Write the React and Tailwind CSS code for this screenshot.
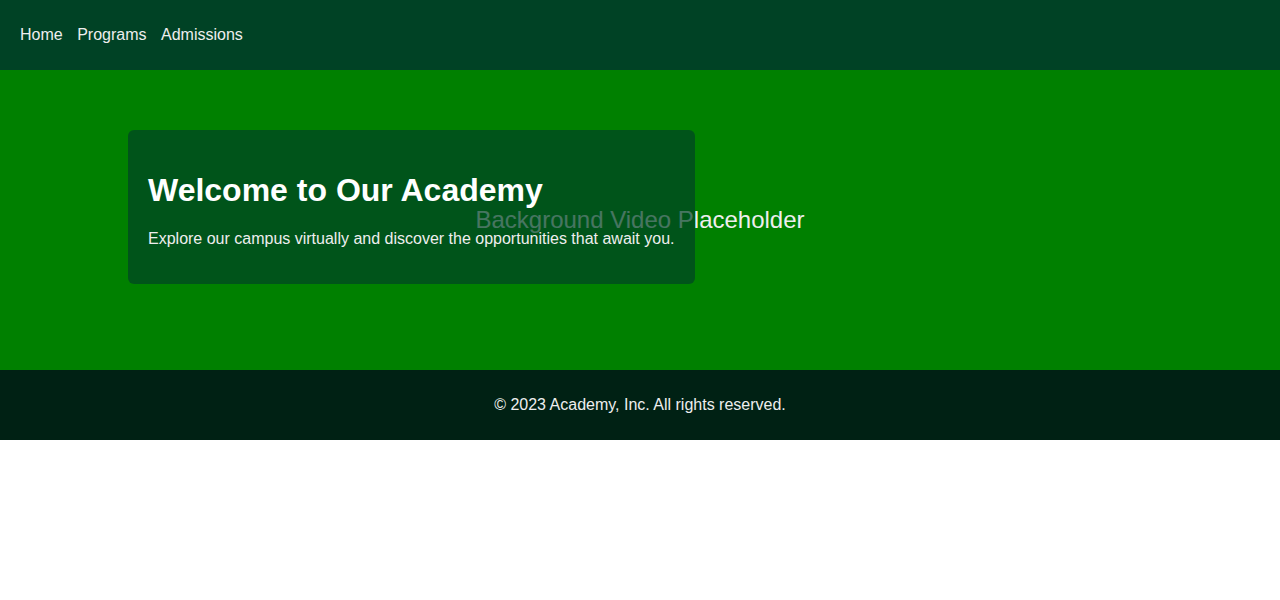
export default function App() {
  return (
    <div className="font-['Liberation_Sans',Arial,sans-serif] text-[#eeeeee]">
      <header className="h-[70px] bg-[#004225] flex items-center px-5">
        <nav className="flex gap-[14.5px] text-base">
          <a href="#">Home</a>
          <a href="#">Programs</a>
          <a href="#">Admissions</a>
        </nav>
      </header>

      <section className="relative h-[300px] bg-[#008000] flex items-center justify-center">
        <p className="text-2xl">Background Video Placeholder</p>
        <div className="absolute top-[60px] left-[10%] bg-[#004225]/70 rounded-md px-5 py-5 text-white">
          <h1 className="text-[32px] font-bold leading-[37px] mt-[22px] mb-[21px]">Welcome to Our Academy</h1>
          <p className="text-base leading-[18px] mb-4 text-[#eeeeee]">
            Explore our campus virtually and discover the opportunities that await you.
          </p>
        </div>
      </section>

      <footer className="h-[70px] bg-[#002114] flex items-center justify-center text-base">
        © 2023 Academy, Inc. All rights reserved.
      </footer>
    </div>
  );
}
